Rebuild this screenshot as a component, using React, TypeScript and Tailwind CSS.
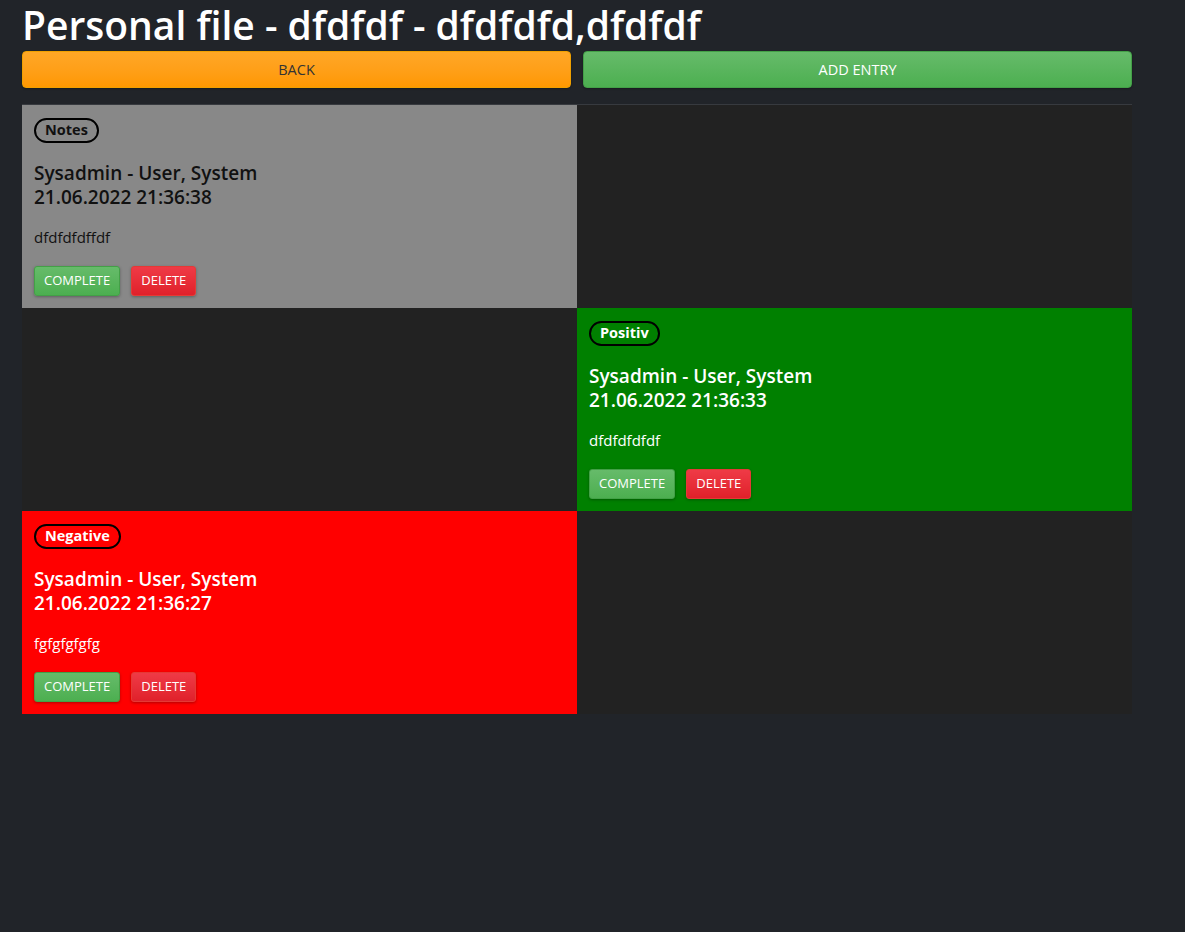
import React from "react";

type Entry = {
    kind: string;
    author: string;
    date: string;
    text: string;
    bg: string;
    fg: string;
    side: "left" | "right";
};

const entries: Entry[] = [
    { kind: "Notes", author: "Sysadmin - User, System", date: "21.06.2022 21:36:38", text: "dfdfdfdffdf", bg: "bg-[#888888]", fg: "text-[#111111]", side: "left" },
    { kind: "Positiv", author: "Sysadmin - User, System", date: "21.06.2022 21:36:33", text: "dfdfdfdfdf", bg: "bg-[#008000]", fg: "text-white", side: "right" },
    { kind: "Negative", author: "Sysadmin - User, System", date: "21.06.2022 21:36:27", text: "fgfgfgfgfg", bg: "bg-[#ff0000]", fg: "text-white", side: "left" },
];

function EntryCard({ entry }: { entry: Entry }) {
    return (
        <div className={`${entry.bg} ${entry.fg} h-full px-3 pt-[13px] flex flex-col items-start`}>
            <div className="border-2 border-black rounded-full px-[9px] h-[25px] flex items-center text-[14.5px] font-bold leading-none">
                {entry.kind}
            </div>
            <div className="mt-[18px] text-[19px] font-semibold leading-6">
                <div>{entry.author}</div>
                <div>{entry.date}</div>
            </div>
            <div className="mt-[18px] text-[15px] leading-5">{entry.text}</div>
            <div className="mt-[19px] flex gap-[11px]">
                <button className="h-[30px] px-[9px] rounded-[3px] border border-[#43a047] bg-gradient-to-b from-[#66bb6a] to-[#4caf50] text-white text-[13px] shadow-[0_1px_3px_rgba(0,0,0,0.3)]">
                    COMPLETE
                </button>
                <button className="h-[30px] px-[9px] rounded-[3px] border border-[#e53935] bg-gradient-to-b from-[#ef3a46] to-[#e0202a] text-white text-[13px] shadow-[0_1px_3px_rgba(0,0,0,0.3)]">
                    DELETE
                </button>
            </div>
        </div>
    );
}

export default function App() {
    return (
        <div className="min-h-[932px] w-full bg-[#212429] font-['Open_Sans','Noto_Sans',sans-serif]">
            <div className="w-[1110px] ml-[22px]">
                <h1 className="text-[39px] font-semibold text-white leading-[50px]">
                    Personal file - dfdfdf - dfdfdfd,dfdfdf
                </h1>
                <div className="mt-[1px] flex gap-3">
                    <button className="flex-1 h-[37px] rounded-[4px] border border-[#f0a000] bg-gradient-to-b from-[#ffa726] to-[#ff9800] text-[#333] text-[14.5px] shadow-[0_1px_2px_rgba(0,0,0,0.3)]">
                        BACK
                    </button>
                    <button className="flex-1 h-[37px] rounded-[4px] border border-[#43a047] bg-gradient-to-b from-[#66bb6a] to-[#4caf50] text-white text-[14.5px] shadow-[0_1px_2px_rgba(0,0,0,0.3)]">
                        ADD ENTRY
                    </button>
                </div>
                <div className="mt-4 border-t border-[#373a3f] grid grid-cols-2">
                    {entries.map((entry, i) => (
                        <React.Fragment key={i}>
                            {entry.side === "left" ? (
                                <>
                                    <div className="h-[203px]"><EntryCard entry={entry} /></div>
                                    <div className="h-[203px] bg-[#222222]" />
                                </>
                            ) : (
                                <>
                                    <div className="h-[203px] bg-[#222222]" />
                                    <div className="h-[203px]"><EntryCard entry={entry} /></div>
                                </>
                            )}
                        </React.Fragment>
                    ))}
                </div>
            </div>
        </div>
    );
}
